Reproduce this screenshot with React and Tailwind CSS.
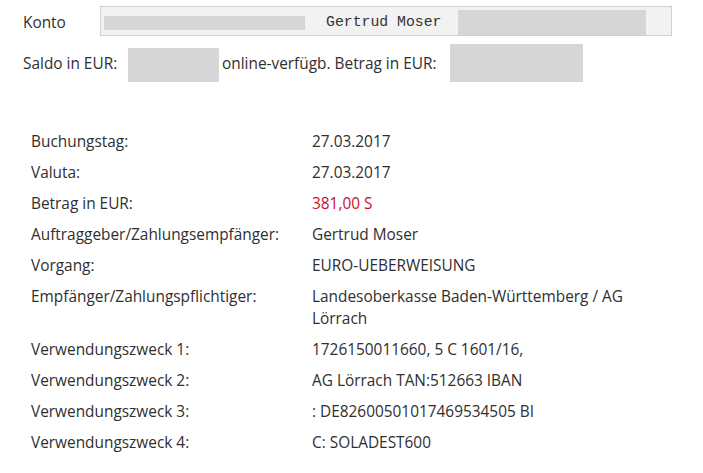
import React from 'react';

const rows = [
  ['Buchungstag:', '27.03.2017'],
  ['Valuta:', '27.03.2017'],
  ['Betrag in EUR:', '381,00 S', true],
  ['Auftraggeber/Zahlungsempfänger:', 'Gertrud Moser'],
  ['Vorgang:', 'EURO-UEBERWEISUNG'],
  ['Empfänger/Zahlungspflichtiger:', 'Landesoberkasse Baden-Württemberg / AG Lörrach'],
  ['Verwendungszweck 1:', '1726150011660, 5 C 1601/16,'],
  ['Verwendungszweck 2:', 'AG Lörrach TAN:512663 IBAN'],
  ['Verwendungszweck 3:', ': DE82600501017469534505 BI'],
  ['Verwendungszweck 4:', 'C: SOLADEST600'],
];

export default function App() {
  return (
    <div className="w-[703px] h-[473px] overflow-hidden bg-white font-['Open_Sans',sans-serif] text-[15.4px] text-[#2f2f2f]">
      {/* Konto */}
      <div className="flex items-center pl-[23px] pt-[6px]">
        <span className="w-[77px] pt-[3px] leading-[22px]">Konto</span>
        <div className="flex w-[572px] h-[30px] border border-[#d0d0d0] bg-[#f2f2f2]">
          <div className="self-start mt-[9px] ml-[3px] w-[201px] h-[14px] bg-[#d6d6d6]" />
          <span className="self-center mt-[2px] ml-[21px] font-['Liberation_Mono',monospace] text-[14.8px] text-[#333]">
            Gertrud Moser
          </span>
          <div className="self-end ml-auto mr-[25px] w-[188px] h-[25px] bg-[#d6d6d6]" />
        </div>
      </div>

      {/* Saldo */}
      <div className="flex items-center h-[38px] mt-[8px] pl-[23px]">
        <span className="w-[105px] pt-[1px]">Saldo in EUR:</span>
        <div className="self-end w-[91px] h-[34px] bg-[#d6d6d6]" />
        <span className="w-[231px] pl-[3px] pt-[1px]">online-verfügb. Betrag in EUR:</span>
        <div className="w-[133px] h-[38px] bg-[#d6d6d6]" />
      </div>

      {/* Details */}
      <table className="mt-[44px] ml-[31px] border-collapse">
        <tbody>
          {rows.map(([label, value, red]) => (
            <tr key={label}>
              <td className="w-[281px] align-top pt-[4.5px] pb-[4.5px] leading-[22px]">{label}</td>
              <td className={`w-[340px] align-top pt-[4.5px] pb-[4.5px] leading-[22px] ${red ? 'text-[#c8102e]' : ''}`}>
                {value}
              </td>
            </tr>
          ))}
        </tbody>
      </table>
    </div>
  );
}
